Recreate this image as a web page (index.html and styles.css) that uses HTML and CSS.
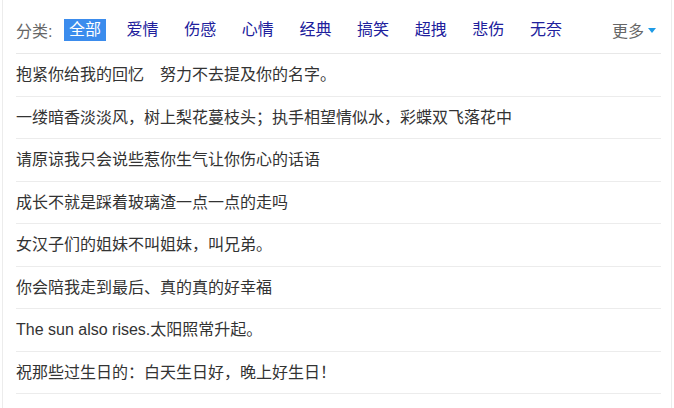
FILE: index.html
```html
<!DOCTYPE html>
<html lang="zh-CN">
<head>
<meta charset="utf-8">
<title>分类</title>
<link rel="stylesheet" href="styles.css">
</head>
<body>
<div class="panel">
  <div class="cats">
    <span class="label">分类:</span>
    <a class="cat active">全部</a>
    <a class="cat">爱情</a>
    <a class="cat">伤感</a>
    <a class="cat">心情</a>
    <a class="cat">经典</a>
    <a class="cat">搞笑</a>
    <a class="cat">超拽</a>
    <a class="cat">悲伤</a>
    <a class="cat">无奈</a>
    <a class="more">更多<span class="tri"></span></a>
  </div>
  <ul class="list">
    <li>抱紧你给我的回忆　努力不去提及你的名字。</li>
    <li>一缕暗香淡淡风，树上梨花蔓枝头；执手相望情似水，彩蝶双飞落花中</li>
    <li>请原谅我只会说些惹你生气让你伤心的话语</li>
    <li>成长不就是踩着玻璃渣一点一点的走吗</li>
    <li>女汉子们的姐妹不叫姐妹，叫兄弟。</li>
    <li>你会陪我走到最后、真的真的好幸福</li>
    <li>The sun also rises.太阳照常升起。</li>
    <li>祝那些过生日的：白天生日好，晚上好生日！</li>
  </ul>
</div>
</body>
</html>
```
FILE: styles.css
```css
html, body {
  margin: 0;
  padding: 0;
  background: #fff;
}
body {
  font-family: "Liberation Sans", "Noto Sans CJK SC", sans-serif;
  font-size: 16px;
  color: #333;
}
.panel {
  margin-left: 2px;
  width: 670px;
  box-sizing: border-box;
  min-height: 408px;
  border-left: 1px solid #ececec;
  border-right: 1px solid #ececec;
  padding: 9px 10px 0 13px;
}
.cats {
  display: flex;
  align-items: center;
  height: 45px;
  box-sizing: border-box;
  padding-bottom: 3px;
  border-bottom: 1px solid #e8e8e8;
}
.label {
  color: #666;
  width: 48px;
}
.cat {
  display: inline-block;
  color: #20209c;
  padding: 0 5px;
  height: 22px;
  line-height: 22px;
  margin-right: 15.6px;
  cursor: pointer;
}
.cat.active {
  background: #3b8ced;
  color: #fff;
}
.more {
  margin-left: auto;
  color: #666;
  display: flex;
  align-items: center;
  margin-right: 5px;
}
.tri {
  width: 0;
  height: 0;
  margin-left: 4px;
  margin-top: 2px;
  border-left: 4px solid transparent;
  border-right: 4px solid transparent;
  border-top: 5px solid #1e9be6;
}
.list {
  list-style: none;
  margin: 0;
  padding: 0;
}
.list li {
  height: 41.5px;
  line-height: 41.5px;
  border-bottom: 1px solid #ececec;
  white-space: nowrap;
}
```
